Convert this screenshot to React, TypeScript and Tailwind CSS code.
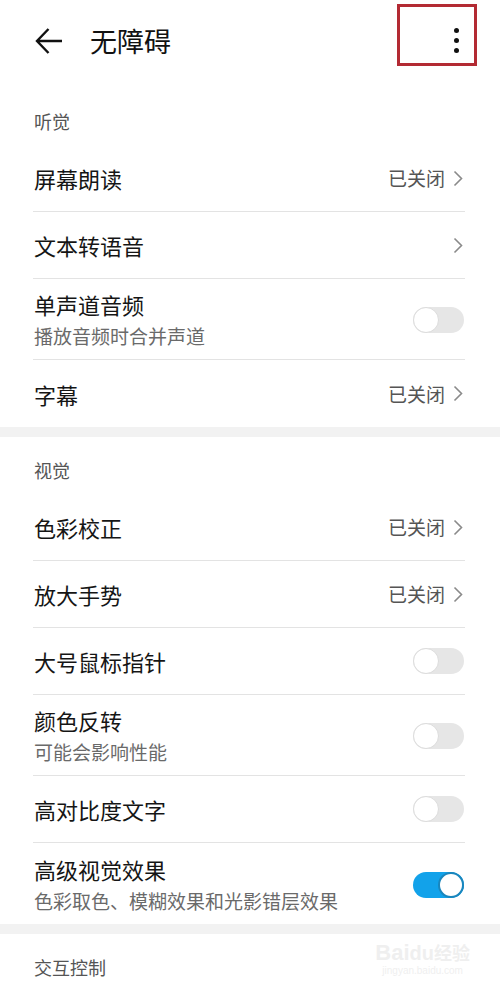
import { ReactNode } from "react";

const font = { fontFamily: '"Noto Sans CJK SC", "Noto Sans", sans-serif' };

type Row = {
  title: string;
  sub?: string;
  value?: string;
  kind: "link" | "toggle";
  on?: boolean;
};

const hearing: Row[] = [
  { title: "屏幕朗读", value: "已关闭", kind: "link" },
  { title: "文本转语音", kind: "link" },
  { title: "单声道音频", sub: "播放音频时合并声道", kind: "toggle" },
  { title: "字幕", value: "已关闭", kind: "link" },
];

const vision: Row[] = [
  { title: "色彩校正", value: "已关闭", kind: "link" },
  { title: "放大手势", value: "已关闭", kind: "link" },
  { title: "大号鼠标指针", kind: "toggle" },
  { title: "颜色反转", sub: "可能会影响性能", kind: "toggle" },
  { title: "高对比度文字", kind: "toggle" },
  { title: "高级视觉效果", sub: "色彩取色、模糊效果和光影错层效果", kind: "toggle", on: true },
];

function Toggle({ on }: { on?: boolean }) {
  if (on) {
    return (
      <div className="flex h-[26px] w-[51px] items-center justify-end rounded-full bg-[#12a2ea]">
        <div className="h-[26px] w-[26px] rounded-full border-[2px] border-[#1a86bd] bg-white" />
      </div>
    );
  }
  return (
    <div className="flex h-[26px] w-[51px] items-center rounded-full bg-[#e6e6e6]">
      <div className="h-[26px] w-[26px] rounded-full border-[1.5px] border-[#dcdcdc] bg-white" />
    </div>
  );
}

function Chevron() {
  return (
    <svg width="10" height="17" viewBox="0 0 10 17" className="ml-[8px]">
      <path d="M1.5 1.5 L8.5 8.5 L1.5 15.5" fill="none" stroke="#8a8a8a" strokeWidth="1.6" />
    </svg>
  );
}

function SettingRow({ row, last }: { row: Row; last: boolean }) {
  return (
    <div
      className={`ml-[33px] mr-[35px] flex items-center justify-between ${
        row.sub ? "h-[81px] pt-[2px]" : "h-[67px]"
      } ${last ? "" : "border-b border-[#e3e3e3]"}`}
    >
      <div className="flex flex-col pl-[1px]">
        <span className="text-[22px] leading-[30px] text-[#151515]">{row.title}</span>
        {row.sub && (
          <span className="mt-[2px] text-[19px] leading-[30px] text-[#6a6a6a]">{row.sub}</span>
        )}
      </div>
      {row.kind === "toggle" ? (
        <div className="mr-[1px]">
          <Toggle on={row.on} />
        </div>
      ) : (
        <div className="mr-[2px] flex items-center">
          {row.value && <span className="text-[19px] leading-[26px] text-[#555]">{row.value}</span>}
          <Chevron />
        </div>
      )}
    </div>
  );
}

function SectionTitle({ children }: { children: ReactNode }) {
  return <div className="h-[57px] pl-[34px] pt-[22px] text-[18px] leading-[22px] text-[#555]">{children}</div>;
}

function Section({ title, rows }: { title: string; rows: Row[] }) {
  return (
    <div>
      <SectionTitle>{title}</SectionTitle>
      {rows.map((r, i) => (
        <SettingRow key={r.title} row={r} last={i === rows.length - 1} />
      ))}
    </div>
  );
}

function Band() {
  return <div className="h-[10px] bg-[#f2f2f2]" />;
}

function Watermark() {
  return (
    <div className="pointer-events-none absolute bottom-[14px] right-[30px] flex flex-col items-center text-[#efefef]">
      <span className="text-[22px] font-bold leading-[24px]" style={{ fontFamily: '"Liberation Sans", sans-serif' }}>
        Bai<span className="text-[20px]">du</span>
        <span className="text-[18px]" style={font}>经验</span>
      </span>
      <span className="text-[10px] leading-[12px]" style={{ fontFamily: '"Liberation Sans", sans-serif' }}>
        jingyan.baidu.com
      </span>
    </div>
  );
}

export default function App() {
  return (
    <div className="relative h-[991px] w-[500px] overflow-hidden bg-white" style={font}>
      <div className="flex h-[88px] items-start">
        <svg width="28" height="28" viewBox="0 0 28 28" className="ml-[35px] mt-[27px]">
          <path d="M27 14 H2 M13.5 2 L2 14 L13.5 26" fill="none" stroke="#111" strokeWidth="2.4" />
        </svg>
        <h1 className="ml-[27px] mt-[24px] text-[27px] leading-[34px] text-[#111]">无障碍</h1>
        <div className="ml-auto mr-[23px] mt-[4px] flex h-[62px] w-[80px] items-start justify-end border-[3px] border-[#b32a33] pr-[15px] pt-[21px]">
          <div className="flex flex-col gap-[5px]">
            <span className="h-[5px] w-[5px] rounded-full bg-[#111]" />
            <span className="h-[5px] w-[5px] rounded-full bg-[#111]" />
            <span className="h-[5px] w-[5px] rounded-full bg-[#111]" />
          </div>
        </div>
      </div>
      <Section title="听觉" rows={hearing} />
      <Band />
      <Section title="视觉" rows={vision} />
      <Band />
      <SectionTitle>交互控制</SectionTitle>
      <Watermark />
    </div>
  );
}
